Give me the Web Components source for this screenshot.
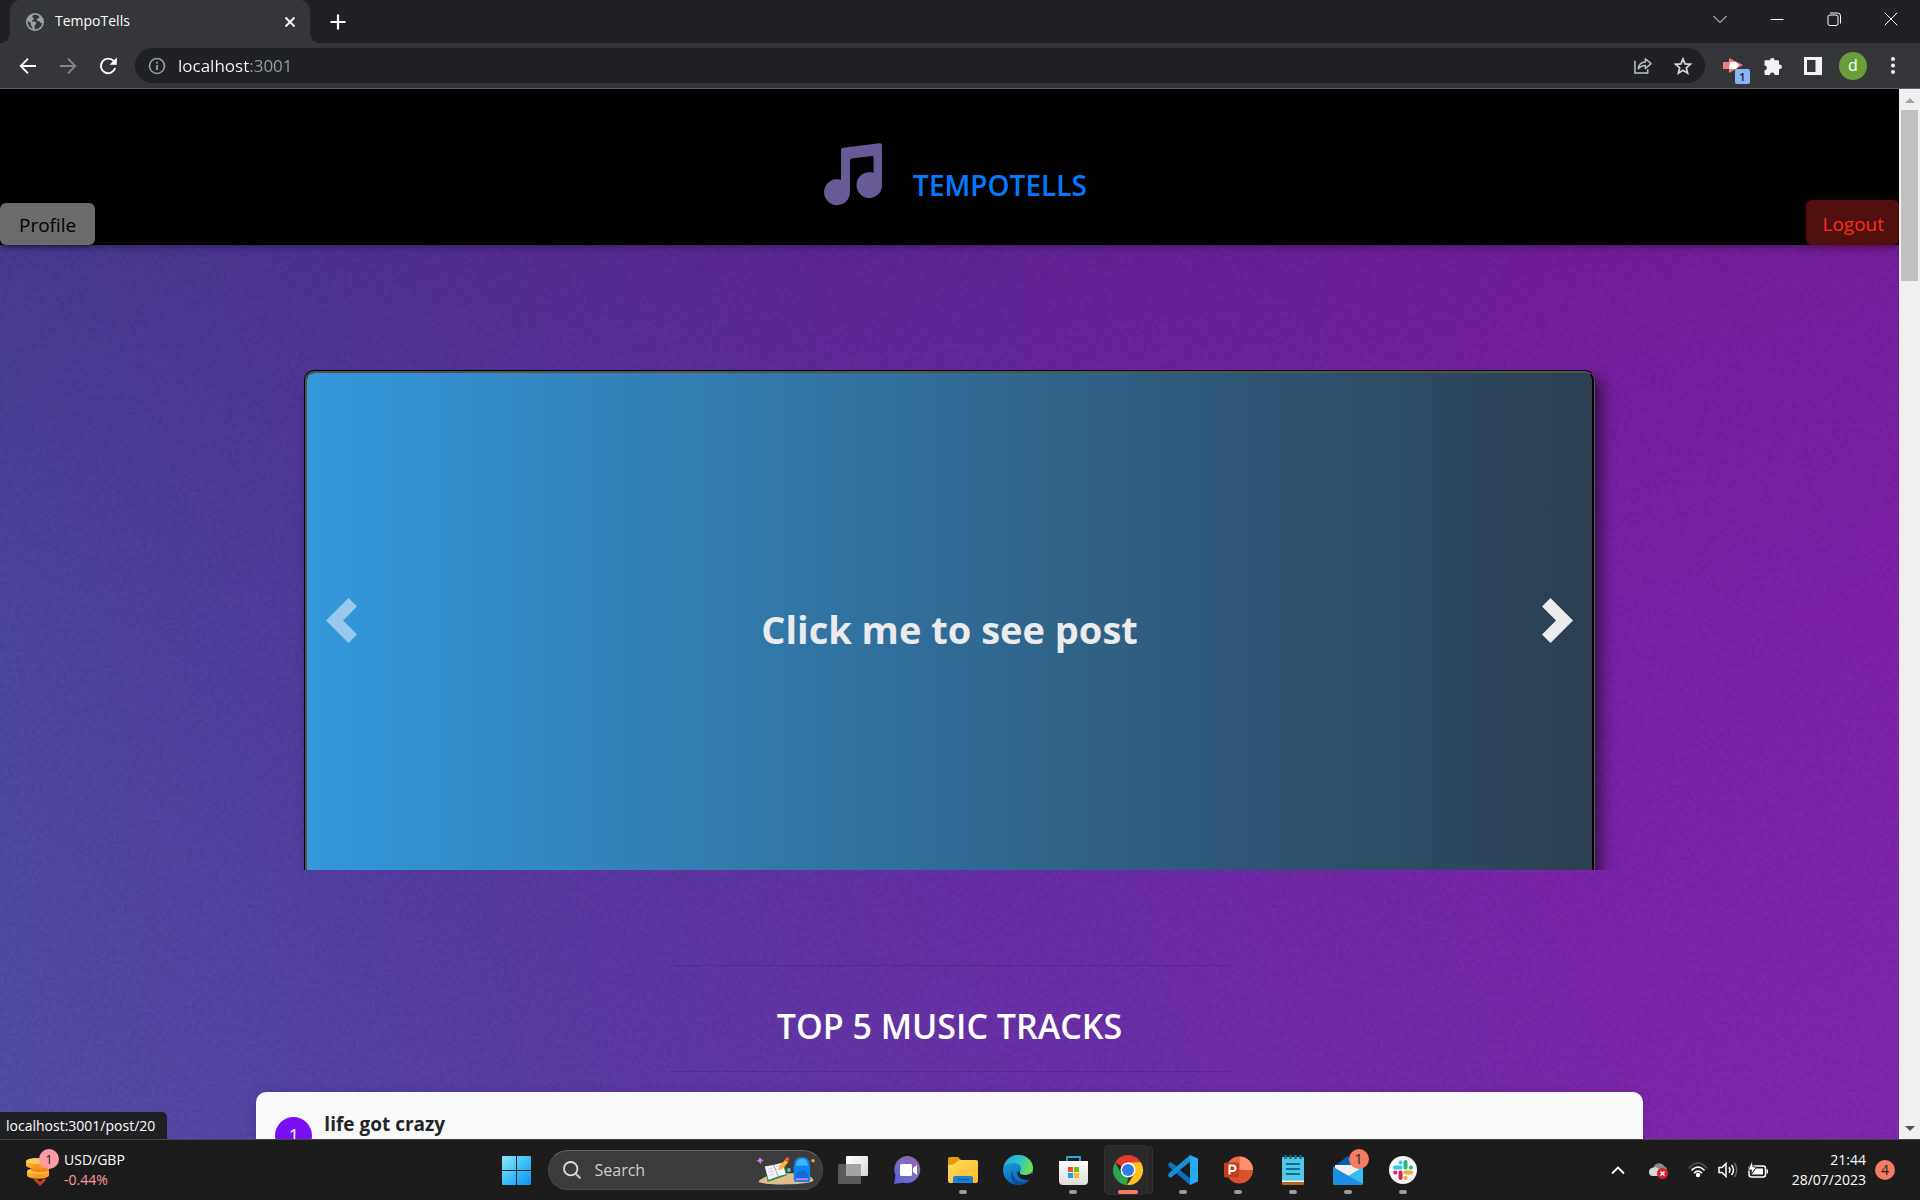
<!DOCTYPE html>
<html lang="en">
<head>
<meta charset="utf-8">
<title>TempoTells</title>
<style>
  html, body { height: 100%; margin: 0; }
  body { font-family: "Open Sans", "Noto Sans", sans-serif; background: #1c1c1c; overflow: hidden; }
</style>
</head>
<body>
<desktop-shell>
  <browser-tabs slot="tabs" label="TempoTells"></browser-tabs>
  <browser-toolbar slot="toolbar" host="localhost" port=":3001"></browser-toolbar>
  <page-view slot="page">
    <site-header>TEMPOTELLS</site-header>
    <post-carousel>Click me to see post</post-carousel>
    <track-section heading="TOP 5 MUSIC TRACKS">
      <track-item rank="1">life got crazy</track-item>
    </track-section>
  </page-view>
  <status-bubble slot="status">localhost:3001/post/20</status-bubble>
  <task-bar slot="taskbar">
    <task-app icon="taskview" label="Task view"></task-app>
    <task-app icon="chat" label="Chat"></task-app>
    <task-app icon="explorer" label="File Explorer" open></task-app>
    <task-app icon="edge" label="Edge"></task-app>
    <task-app icon="store" label="Store" open></task-app>
    <task-app icon="chrome" label="Chrome" open active></task-app>
    <task-app icon="vscode" label="Visual Studio Code" open></task-app>
    <task-app icon="powerpoint" label="PowerPoint" open></task-app>
    <task-app icon="notepad" label="Notepad" open></task-app>
    <task-app icon="mail" label="Mail" open badge="1"></task-app>
    <task-app icon="slack" label="Slack" open></task-app>
  </task-bar>
</desktop-shell>

<script>
const ICONS = {
  globe: `<svg viewBox="0 0 18 18"><circle cx="9" cy="9" r="9" fill="#9aa0a6"/><path d="M9.6 1.8c-2.600 0-3.600 1.200-3.200 2.400.3.900 1.700.7 1.600 1.700-.1.900-1.600.6-2 1.500-.3.800.6 1.200 1.700 1.200 1.600 0 2.600.6 2.500 2-.1 1.300-1.400 1.300-1.600 2.500-.2.900-.1 1.900.400 3.100 3.400.2 6.700-2.300 7.200-6.200-1.300.6-2 .1-2.300-.9-.4-1.200-1.700-.6-2.600-1.400-1-.9-.2-2.200 1-2.400 1.100-.1 1.300-.9.800-1.700C12.300 2.500 11 1.800 9.600 1.800Z M1.800 8.300c1.200.5 2.500.9 2.900 2 .3 1 0 1.700.5 2.500.4.700 1.200 1.200 1.300 2.900C3.500 14.600 1.500 11.700 1.800 8.300Z" fill="#35363a"/></svg>`,
  x: `<svg viewBox="0 0 12 12"><path d="M1.500 1.500l9 9m0-9l-9 9" stroke="#fff" stroke-width="1.800"/></svg>`,
  plus: `<svg viewBox="0 0 16 16"><path d="M8 .5v15M.5 8h15" stroke="#fff" stroke-width="2.200"/></svg>`,
  chevdown: `<svg viewBox="0 0 14 14"><path d="M.5 4l6.500 6.500L13.500 4" fill="none" stroke="#fff" stroke-width="1"/></svg>`,
  min: `<svg viewBox="0 0 14 14"><path d="M.5 7.500h13" stroke="#fff"/></svg>`,
  max: `<svg viewBox="0 0 14 14"><rect x="1" y="3" width="10" height="10.500" rx="2" fill="none" stroke="#fff"/><path d="M3 1h7.500a3 3 0 0 1 3 3v7.500" fill="none" stroke="#fff"/></svg>`,
  close: `<svg viewBox="0 0 14 14"><path d="M.7.7l12.600 12.600m0-12.600L.7 13.300" stroke="#fff"/></svg>`,
  back: `<svg viewBox="0 0 18 18"><path d="M17 9H2m7-7.300L1.700 9 9 16.300" fill="none" stroke="#fff" stroke-width="1.800"/></svg>`,
  forward: `<svg viewBox="0 0 18 18"><path d="M1 9h15M9 1.700L16.300 9 9 16.300" fill="none" stroke="#87888b" stroke-width="1.800"/></svg>`,
  reload: `<svg viewBox="0 0 18 18"><path d="M14.800 4.200A7.300 7.300 0 1 0 16.200 11" fill="none" stroke="#fff" stroke-width="1.900"/><path d="M17.800.5v7.300h-7.300z" fill="#fff"/></svg>`,
  info: `<svg viewBox="0 0 18 18"><circle cx="9" cy="9" r="7.500" fill="none" stroke="#9aa0a6" stroke-width="1.600"/><path d="M9 8v5M9 4.800v1.800" stroke="#9aa0a6" stroke-width="1.800"/></svg>`,
  share: `<svg viewBox="0 0 19 18"><path d="M1 4v13h13.500v-4" fill="none" stroke="#bdc1c6" stroke-width="1.600"/><path d="M4.500 12.500C5 8 8 5.500 12 5.300V1.800L18 7l-6 5.200V9c-3.500 0-5.500 1-7.500 3.500Z" fill="none" stroke="#bdc1c6" stroke-width="1.500" stroke-linejoin="round"/></svg>`,
  star: `<svg viewBox="0 0 18 18"><path d="M9 1.900l2.100 5 5.300.4-4.100 3.500 1.300 5.300L9 13.200l-4.600 2.900 1.300-5.300-4.100-3.500 5.300-.4Z" fill="none" stroke="#d5d7da" stroke-width="1.700"/></svg>`,
  ext: `<svg viewBox="0 0 20 16"><path d="M0 4h6V0l14 7-14 8v-4H0Z" fill="#f57c7c"/><path d="M7 4h6l3 3-3 4H6Z" fill="#fff"/></svg>`,
  puzzle: `<svg viewBox="0 0 18 18"><path d="M6 3.200a2.300 2.300 0 0 1 4.600 0H14a1 1 0 0 1 1 1v3.300h.6a2.300 2.300 0 0 1 0 4.600H15V17a1 1 0 0 1-1 1h-3.300a2.400 2.400 0 0 0-4.800 0H1.500a1 1 0 0 1-1-1v-3.700a2.400 2.400 0 0 0 0-4.800V4.200a1 1 0 0 1 1-1Z" fill="#f1f3f4"/></svg>`,
  panel: `<svg viewBox="0 0 18 18"><path d="M0 0h18v18H0Z M3 3v12h8.500V3Z" fill="#f1f3f4" fill-rule="evenodd"/></svg>`,
  dots: `<svg viewBox="0 0 4 17"><circle cx="2" cy="2" r="2" fill="#f1f3f4"/><circle cx="2" cy="8.500" r="2" fill="#f1f3f4"/><circle cx="2" cy="15" r="2" fill="#f1f3f4"/></svg>`,
  music: `<svg viewBox="0 0 58 62"><path d="M17 7q0-2 2-2.200L55.500.2Q58 0 58 2v38.500A12.800 13 0 1 1 49.500 29.800V14.500q0-1.500-1.500-1.400l-20.500 2.500q-1.500.2-1.500 1.700V48.500A13 13 0 1 1 17 36.800Z" fill="#675a97"/></svg>`,
  prev: `<svg viewBox="0 0 31 45"><path d="M22.500 0L31 8.500 17 22.500 31 36.500 22.500 45 0 22.500Z" fill="#fff"/></svg>`,
  next: `<svg viewBox="0 0 31 45"><path d="M8.500 0L0 8.500 14 22.500 0 36.500 8.500 45 31 22.500Z" fill="#fff"/></svg>`,
  coins: `<svg viewBox="0 0 24 29"><defs><linearGradient id="g" x2="1"><stop stop-color="#ffb52e"/><stop offset=".5" stop-color="#f7931e"/><stop offset="1" stop-color="#ffa726"/></linearGradient></defs><path d="M1 14v4c0 5 22 5 22 0v-4Z" fill="url(#g)"/><ellipse cx="12" cy="14" rx="11" ry="3" fill="#ffc14a"/><path d="M5 9v4c0 3 18 3 18 0V8Z" fill="#f0891a"/><path d="M0 4v4c0 5 20 5 20 0V4Z" fill="url(#g)"/><ellipse cx="10" cy="4" rx="10" ry="3" fill="#ffc95c"/><path d="M9 22l5 5 5-5" fill="none" stroke="#c8401a" stroke-width="3"/></svg>`,
  windows: `<svg viewBox="0 0 29 29"><defs><linearGradient id="g" gradientUnits="userSpaceOnUse" x2="29" y2="29"><stop stop-color="#8fe4fd"/><stop offset=".5" stop-color="#3cc1f8"/><stop offset="1" stop-color="#0a92f5"/></linearGradient></defs><path d="M1 0h13v14H0V1a1 1 0 0 1 1-1ZM15 0h13a1 1 0 0 1 1 1v13H15ZM0 15h14v14H1a1 1 0 0 1-1-1ZM15 15h14v13a1 1 0 0 1-1 1H15Z" fill="url(#g)"/></svg>`,
  lens: `<svg viewBox="0 0 18 18"><circle cx="7.700" cy="7.700" r="6.700" fill="none" stroke="#dcdcdc" stroke-width="1.800"/><path d="M12.500 12.500l5 5" stroke="#b9c0cc" stroke-width="2.400"/></svg>`,
  school: `<svg viewBox="0 0 60 31"><path d="M2 28C0 26 14 19 24 19h20c8 0 16 6 14 8-6 4-48 5-56 1Z" fill="#e2bd8e"/><path d="M9 14l20-4 2 11-20 7Z" fill="#2f8f45"/><path d="M8 12l10-2 8-2 4 12-8 2-10 4Z" fill="#f6f4fb"/><path d="M17 10l5 12" stroke="#9a93b8" stroke-width="1"/><path d="M11 15l5-1.500M12 18l5-1.500M13 21l5-1.500M20 12l5-1.500M21 15l5-1.500" stroke="#b9b3d0" stroke-width=".8"/><path d="M23 12l6-7 3.500 2.500-6 6.500-4 2Z" fill="#ffb02e"/><path d="M28.500 5l1.500-2q2-1.500 3.200.2.800 1.500-.7 3.300Z" fill="#f4584d"/><path d="M38 12q0-10 8.500-10t8.500 10v13q0 3-3 3H41q-3 0-3-3Z" fill="#0a84f0"/><path d="M40.500 11q0-7 6-7t6 7Z" fill="#45b4ff"/><path d="M40 24q0-8 6.500-8t6.500 8Z" fill="#1668d8"/><path d="M40 25h13" stroke="#c77dff" stroke-width="2"/><path d="M3 2l1.500 2.500 2.500 1-2.500 1.500L3.500 9.500 2 7-.5 6 2 4.500Z" fill="#d67cf2"/><circle cx="33" cy="15.500" r="2" fill="#50c8d8"/><circle cx="58" cy="6" r="1.800" fill="#f6a21c"/></svg>`,
  taskview: `<svg viewBox="0 0 30 28"><defs><linearGradient id="g" x2="1" y2="1"><stop stop-color="#fff"/><stop offset="1" stop-color="#d8d8d8"/></linearGradient></defs><rect x="0" y="8" width="23" height="20" rx="1" fill="#5a5a5a"/><rect x="8" y="0" width="22" height="20" rx="1" fill="url(#g)"/><rect x="8" y="8" width="15" height="12" fill="#a3a3a3"/></svg>`,
  chat: `<svg viewBox="0 0 28 28"><defs><linearGradient id="g" x1="1" x2="0" y2="1"><stop stop-color="#9b5fa5"/><stop offset=".5" stop-color="#7b6cc4"/><stop offset="1" stop-color="#4f5fd0"/></linearGradient></defs><path d="M14.500 0A13.700 13.700 0 1 1 9 26.800L0 28l1.500-8.500A13.700 13.700 0 0 1 14.500 0Z" fill="url(#g)"/><rect x="6" y="8" width="12" height="12" rx="1.500" fill="#fff"/><path d="M19 12l4-3v10l-4-3Z" fill="#fff"/></svg>`,
  explorer: `<svg viewBox="0 0 30 27"><defs><linearGradient id="g" x2="1" y2="1"><stop stop-color="#ffdb5e"/><stop offset="1" stop-color="#fdb924"/></linearGradient></defs><path d="M0 2q0-2 2-2h8l3 3v6H0Z" fill="#e09a0b"/><path d="M0 8q6 0 8-2.500Q9.500 3 12 3h16q2 0 2 2v19q0 2-2 2H2q-2 0-2-2Z" fill="url(#g)"/><path d="M5 26v-5q0-2 2-2h16q2 0 2 2v5Z" fill="#1285d8"/><path d="M9 22.500h12" stroke="#0b5aa5" stroke-width="1.500"/></svg>`,
  edge: `<svg viewBox="0 0 30 30"><defs><linearGradient id="a" x2="1" y2=".3"><stop stop-color="#2aa7e0"/><stop offset=".6" stop-color="#2fc2c8"/><stop offset="1" stop-color="#6be04e"/></linearGradient><linearGradient id="b" x2=".4" y2="1"><stop stop-color="#1bafe6"/><stop offset="1" stop-color="#0a62b8"/></linearGradient></defs><circle cx="15" cy="15" r="15" fill="url(#b)"/><path d="M1 11C3 4 9 0 15 0c9 0 15 6 15 13 0 5-4 7-8 7-5 0-6-2-5-4 3-3 0-7-5-8-5 0-9 1-11 3Z" fill="url(#a)"/><path d="M12 11c-5 5-2 14 5 16 4 1 8 0 10.500-3A15 15 0 0 1 15 30C8 29 5 19 12 11Z" fill="#114b94"/><path d="M17 16c-1 2 0 4 5 4 2.500 0 5-.6 6.500-2l1.500 4-2.500 2c-7 3-14-2-13-7Z" fill="#1c1c1c"/></svg>`,
  store: `<svg viewBox="0 0 29 29"><defs><linearGradient id="g" y2="1" x2="0"><stop stop-color="#fff"/><stop offset="1" stop-color="#dcdcdc"/></linearGradient></defs><path d="M8 5V1h13v4" fill="none" stroke="#23a8e6" stroke-width="1.800"/><path d="M0 5h29v20q0 4-4 4H4q-4 0-4-4Z" fill="url(#g)"/><path d="M9 11h5v5H9Z" fill="#f04e23"/><path d="M15 11h5v5h-5Z" fill="#7fb80e"/><path d="M9 17h5v5H9Z" fill="#10a3e8"/><path d="M15 17h5v5h-5Z" fill="#fdb813"/></svg>`,
  chrome: `<svg viewBox="0 0 30 30"><path d="M15 15L2 7.500A15 15 0 0 1 28 7.500Z" fill="#e63b2e"/><path d="M2 7.500L8.500 18.700 15 22.500 14 30A15 15 0 0 1 2 7.500Z" fill="#2da44e"/><path d="M28 7.500A15 15 0 0 1 14 30l7.500-11.200L22 7.500Z" fill="#fcc21b"/><path d="M15 7.500h13L22 19Z" fill="#fcc21b"/><circle cx="15" cy="15" r="7.500" fill="#fff"/><circle cx="15" cy="15" r="6" fill="#2f7bea"/></svg>`,
  vscode: `<svg viewBox="0 0 30 30"><path d="M0 9l2.500-2 5 3.500L22 23v7L1 12Z" fill="#0d71b9"/><path d="M0 21l2.500 2L22 7V0L1 18Z" fill="#168fd6"/><path d="M22 0l8 3.500v23L22 30Z" fill="#29a9f2"/><path d="M12 15L22 7v16Z" fill="#1c1c1c"/></svg>`,
  powerpoint: `<svg viewBox="0 0 29 28"><circle cx="15.500" cy="14" r="13.500" fill="#d9532f"/><path d="M15.500.5A13.500 13.500 0 0 1 29 14H15.500Z" fill="#fd9073"/><path d="M15.500.5A13.500 13.500 0 0 0 2 14h13.500Z" fill="#eb6b49"/><rect x="0" y="6.500" width="15" height="15" rx="1.500" fill="#c23b1b"/><path d="M5.500 18.500v-9h3.200a2.800 2.800 0 0 1 0 5.600H5.500" fill="none" stroke="#fff" stroke-width="2"/></svg>`,
  notepad: `<svg viewBox="0 0 22 30"><rect x="0" y="24" width="22" height="6" rx="1" fill="#b0671d"/><rect x="0" y="23" width="22" height="4" fill="#f2f2f2"/><rect x="0" y="2" width="22" height="23.500" rx="1" fill="#53c5e6"/><path d="M3.500 0v4m5-4v4m5-4v4m5-4v4" stroke="#0b6d8f" stroke-width="2.400"/><path d="M4 9h14M4 14h14M4 19h14" stroke="#0b6f92" stroke-width="1.800"/></svg>`,
  mail: `<svg viewBox="0 0 30 29"><path d="M0 11L15 0l15 11v6H0Z" fill="#0c5fae"/><path d="M2 9h26v8l-13 5L2 17Z" fill="#f0f0f0"/><path d="M0 11l15 9L30 11v16q0 2-2 2H2q-2 0-2-2Z" fill="#35bdf4"/><path d="M0 11l30 17q-1 1-2 1H2q-2 0-2-2Z" fill="#1e8fe0"/></svg>`,
  slack: `<svg viewBox="0 0 28 28"><circle cx="14" cy="14" r="14" fill="#f7f7f7"/><g stroke-width="4" stroke-linecap="round"><path d="M11.500 6.500v.1M6 11.500h5.500" stroke="#36c5f0"/><path d="M16.500 6v5.500M21.800 11.500h.1" stroke="#2eb67d"/><path d="M16.500 21.800v.1M16.500 16.500H22" stroke="#ecb22e"/><path d="M11.500 16.500V22M6.200 16.500h.1" stroke="#e01e5a"/></g></svg>`,
  up: `<svg viewBox="0 0 14 10"><path d="M1 8.500l6-6 6 6" fill="none" stroke="#fff" stroke-width="1.800"/></svg>`,
  cloud: `<svg viewBox="0 0 20 17"><path d="M6 4a6 6 0 0 1 10 0q3 1 3 4v6H6Z" fill="#8a8a8a"/><path d="M1 10q0-4 4-4.500Q9 4 11 8q3 0 3 3t-3 3H4q-3-.5-3-4Z" fill="#d6d6d6"/><circle cx="14.500" cy="11.500" r="5.500" fill="#d6202c"/><path d="M12.500 9.500l4 4m0-4l-4 4" stroke="#fff" stroke-width="1.500"/></svg>`,
  wifi: `<svg viewBox="0 0 20 16"><g fill="none" stroke-width="1.600"><path d="M.8 6.500Q10-4.500 19.200 6.500" stroke="#555"/><path d="M3.500 8.500q6.500-7 13 0M6 11.200q4-4.200 8 0" stroke="#fff"/></g><circle cx="10" cy="13" r="2.200" fill="#fff"/></svg>`,
  volume: `<svg viewBox="0 0 20 16"><g fill="none" stroke="#fff" stroke-width="1.500"><path d="M1 5.500h3L8 1.500v13L4 10.500H1Z"/><path d="M11 5.300q2 2.700 0 5.400M13.500 3q4 5 0 10"/><path d="M16.500 1q4.500 7 0 14" stroke="#666"/></g></svg>`,
  battery: `<svg viewBox="0 0 20 17"><rect x="1" y="4" width="16.500" height="11" rx="2.500" fill="none" stroke="#fff" stroke-width="1.500"/><path d="M3.500 12.500h11.500v-6H8Z" fill="#fff"/><path d="M18.500 7.500H20v4h-1.500Z" fill="#fff"/><path d="M4-1L0 8h3.500L3 12.500 8.500 5H5Z" fill="#fff" stroke="#1c1c1c" stroke-width=".8"/></svg>`
};

/* Shared base: renders a template into an open shadow root */
class Part extends HTMLElement {
  connectedCallback() {
    if (this.shadowRoot) return;
    const t = document.createElement('template');
    t.innerHTML = `<style>*{box-sizing:border-box}button{border:0;padding:0;background:none;color:inherit;font:inherit;display:grid;place-items:center;cursor:pointer}</style>` + this.view();
    this.attachShadow({ mode: 'open' }).append(t.content.cloneNode(true));
  }
  get(name) { return this.getAttribute(name) || ''; }
}

customElements.define('ui-icon', class extends Part {
  view() {
    return `<style>:host{display:block;flex:none;width:var(--w,18px)}svg{display:block;width:100%;overflow:visible}</style>${ICONS[this.get('name')]}`;
  }
});

customElements.define('desktop-shell', class extends Part {
  view() { return `<style>
    :host{display:flex;flex-direction:column;height:100vh}
    .screen{flex:1;min-height:0;position:relative;display:flex;border-top:1px solid #606164}
    ::slotted(page-view){flex:1;min-width:0}
    ::slotted(status-bubble){position:absolute;left:0;bottom:0;z-index:2}
    .bar{width:21px;background:#f0f0f0;display:flex;flex-direction:column;align-items:center;justify-content:space-between;padding-bottom:8px}
    .top{display:flex;flex-direction:column;align-items:center;gap:7px;padding-top:9px}
    .up,.down{border:5px solid transparent}
    .up{border-top:0;border-bottom-color:#a3a3a3}
    .down{border-bottom:0;border-top-color:#505050}
    .thumb{width:17px;height:171px;background:#c1c1c1}
  </style>
  <slot name="tabs"></slot><slot name="toolbar"></slot>
  <div class="screen"><slot name="page"></slot>
    <div class="bar"><div class="top"><div class="up"></div><div class="thumb"></div></div><div class="down"></div></div>
    <slot name="status"></slot></div>
  <slot name="taskbar"></slot>`; }
});

customElements.define('browser-tabs', class extends Part {
  view() { return `<style>
    :host{display:flex;height:43px;flex:none;background:#202124;color:#fff;padding:0 1px 0 10px;align-items:stretch}
    .tab{position:relative;width:300px;background:#35363a;border-radius:10px 10px 0 0;display:flex;align-items:center;padding:0 14px 0 16px;gap:11px;font-size:14px;line-height:20px}
    .tab::before,.tab::after{content:"";position:absolute;bottom:0;width:10px;height:10px}
    .tab::before{left:-10px;background:radial-gradient(circle at 0 0,#202124 10px,#35363a 10px)}
    .tab::after{right:-10px;background:radial-gradient(circle at 100% 0,#202124 10px,#35363a 10px)}
    .name{flex:1;padding-bottom:1px}
    .new{width:55px}
    .win{margin-left:auto;display:flex;--w:14px}
    .win button{width:57px;height:37px}
  </style>
  <div class="tab"><ui-icon name="globe"></ui-icon><span class="name">${this.get('label')}</span>
    <button aria-label="Close tab" style="--w:12px"><ui-icon name="x"></ui-icon></button></div>
  <button class="new" aria-label="New tab" style="--w:16px"><ui-icon name="plus"></ui-icon></button>
  <div class="win"><button aria-label="Search tabs"><ui-icon name="chevdown"></ui-icon></button><button aria-label="Minimise"><ui-icon name="min"></ui-icon></button><button aria-label="Restore"><ui-icon name="max"></ui-icon></button><button aria-label="Close"><ui-icon name="close"></ui-icon></button></div>`; }
});

customElements.define('browser-toolbar', class extends Part {
  view() { return `<style>
    :host{display:flex;height:45px;flex:none;background:#35363a;align-items:center;padding:0 7px 0 8px;color:#fff}
    button{width:40px;height:36px}
    .omni{flex:1;height:35px;margin:0 8px 0 7px;border-radius:18px;background:#202124;display:flex;align-items:center;padding:0 2px 0 13px;gap:12px}
    .acts{display:flex}
    input{flex:1;min-width:0;border:0;outline:0;padding:0;font:17px/24px "Open Sans",sans-serif;color:#fff;background:linear-gradient(90deg,#fff 71px,#9aa0a6 71px);-webkit-background-clip:text;background-clip:text;-webkit-text-fill-color:transparent}
    .ext{position:relative}
    .count{position:absolute;right:3px;bottom:0;width:15px;height:15px;border-radius:2px;background:#8ab4f8;color:#202124;font:600 11px/15px "Open Sans",sans-serif;text-align:center}
    .me span{width:28px;height:28px;border-radius:50%;background:#689f38;font-size:16px;line-height:27px}
  </style>
  <button aria-label="Back"><ui-icon name="back"></ui-icon></button>
  <button aria-label="Forward"><ui-icon name="forward"></ui-icon></button>
  <button aria-label="Reload"><ui-icon name="reload"></ui-icon></button>
  <div class="omni"><ui-icon name="info"></ui-icon>
    <input aria-label="Address" value="${this.get('host')}${this.get('port')}">
    <div class="acts"><button aria-label="Share"><ui-icon name="share"></ui-icon></button><button aria-label="Bookmark"><ui-icon name="star"></ui-icon></button></div></div>
  <button class="ext" aria-label="Extension" style="--w:20px"><ui-icon name="ext"></ui-icon><span class="count">1</span></button>
  <button aria-label="Extensions"><ui-icon name="puzzle"></ui-icon></button>
  <button aria-label="Side panel"><ui-icon name="panel"></ui-icon></button>
  <button class="me" aria-label="Account"><span>d</span></button>
  <button aria-label="Menu" style="--w:4px"><ui-icon name="dots"></ui-icon></button>`; }
});

customElements.define('page-view', class extends Part {
  view() { return `<style>
    :host{display:block;position:relative;overflow:hidden;isolation:isolate;
      background:linear-gradient(180deg,rgba(20,0,40,.16),rgba(20,0,40,0) 50%,rgba(160,100,230,.1)),linear-gradient(73deg,#4c4ca2 0%,#543a9f 25%,#672ca4 50%,#7b22a8 75%,#8522ae 100%)}
    .grain{position:absolute;inset:0;width:100%;height:100%;opacity:.1;z-index:-1}
  </style>
  <svg class="grain" aria-hidden="true"><filter id="n" color-interpolation-filters="sRGB"><feTurbulence type="fractalNoise" baseFrequency=".25" numOctaves="2"/><feColorMatrix values="0 0 0 0 0  0 0 0 0 0  0 0 0 0 .1  1.500 0 0 0 -.4"/></filter><rect width="100%" height="100%" filter="url(#n)"/></svg>
  <slot></slot>`; }
});

customElements.define('site-header', class extends Part {
  view() { return `<style>
    :host{display:grid;grid-template-columns:1fr auto 1fr;height:156px;background:#000;align-items:end;box-shadow:0 2px 8px rgba(0,0,0,.35)}
    a{display:flex;align-items:flex-end;gap:31px;padding:0 0 40px 12px;color:#007bff;text-decoration:none;font-weight:600;font-size:28px;line-height:40px;--w:58px}
    button{border-radius:6px;font-size:19px;line-height:24px}
    .profile{justify-self:start;background:#6b6b6b;color:#000;padding:10px 19px 8px;box-shadow:0 2px 5px rgba(0,0,0,.3)}
    .logout{justify-self:end;background:#4f100e;color:#ff2c1f;padding:12px 15px 9px 16px;box-shadow:0 0 8px rgba(79,16,14,.5)}
  </style>
  <button class="profile">Profile</button>
  <a href="#"><ui-icon name="music"></ui-icon><span><slot></slot></span></a>
  <button class="logout">Logout</button>`; }
});

customElements.define('post-carousel', class extends Part {
  view() { return `<style>
    :host{display:block;position:relative;width:calc(68% - 1px);height:500px;margin:125px auto 0;overflow-y:clip}
    .card{height:518px;display:grid;place-items:center;border:3px groove #000;border-radius:10px;background:linear-gradient(90deg,#3498db,#2c3e50);box-shadow:7px 7px 14px rgba(0,0,0,.5);color:#ebebeb;font-weight:700;font-size:38px;line-height:52px;text-decoration:none}
    button{position:absolute;top:0;bottom:0;--w:31px}
    .prev{left:22px;opacity:.5}.next{right:22px;opacity:.9}
  </style>
  <a class="card" href="#"><slot></slot></a>
  <button class="prev" aria-label="Previous"><ui-icon name="prev"></ui-icon></button>
  <button class="next" aria-label="Next"><ui-icon name="next"></ui-icon></button>`; }
});

customElements.define('track-section', class extends Part {
  view() { return `<style>
    :host{display:block;margin-top:95px}
    hr{width:560px;margin:0 auto;border:0;border-top:1px solid rgba(0,0,0,.14)}
    h2{margin:0;padding:37px 0 22px;text-align:center;color:#fff;font-weight:600;font-size:34px;line-height:46px}
    .list{width:73%;margin:20px auto 0;background:#f9f9f9;border-radius:10px;padding:20px 19px;min-height:400px;box-shadow:0 0 10px rgba(0,0,0,.15)}
  </style>
  <hr><h2>${this.get('heading')}</h2><hr><div class="list"><slot></slot></div>`; }
});

customElements.define('track-item', class extends Part {
  view() { return `<style>
    :host{display:flex;gap:12px;align-items:flex-start;color:#212529}
    .rank{flex:none;width:37px;height:37px;margin-top:5px;border-radius:50%;background:#7a10f2;color:#fff;font-size:18px;line-height:37px;text-align:center}
    .name{font-size:19px;line-height:24px;font-weight:700}
  </style>
  <span class="rank">${this.get('rank')}</span><span class="name"><slot></slot></span>`; }
});

customElements.define('status-bubble', class extends Part {
  view() { return `<style>:host{display:block;background:#202124;color:#fff;font-size:14px;line-height:20px;padding:4px 12px 3px 6px;border-radius:0 5px 0 0}</style><slot></slot>`; }
});

customElements.define('task-app', class extends Part {
  view() {
    const widths = { taskview:30, chat:28, explorer:30, edge:30, store:29, chrome:30, vscode:30, powerpoint:29, notepad:22, mail:30, slack:28 };
    const open = this.hasAttribute('open'), active = this.hasAttribute('active');
    return `<style>
    :host{display:block}
    button{position:relative;width:55px;height:50px;--w:${widths[this.get('icon')]}px}
    .plate{position:absolute;top:0;bottom:0;left:3px;width:44px;border-radius:5px;background:#2a2a2a;border:1px solid #333;box-shadow:5px 0 0 -1px #262626,6px 0 0 -1px #353535}
    ui-icon{position:relative}
    .mark{position:absolute;bottom:1px;left:calc(50% - ${active ? 10 : 4}px);width:${active ? 20 : 8}px;height:4px;border-radius:2px;background:${active ? '#f47c63' : '#9b9b9b'}}
    .badge{position:absolute;left:28px;top:4px;width:20px;height:20px;border-radius:50%;background:#f47c63;color:#1c1c1c;font-size:14px;line-height:20px}
    </style><button aria-label="${this.get('label')}">${active ? '<span class="plate"></span>' : ''}<ui-icon name="${this.get('icon')}"></ui-icon>${open ? '<span class="mark"></span>' : ''}${this.get('badge') ? `<span class="badge">${this.get('badge')}</span>` : ''}</button>`;
  }
});

customElements.define('task-bar', class extends Part {
  view() { return `<style>
    :host{display:grid;grid-template-columns:1fr auto 1fr;height:60px;flex:none;align-items:center;background:#1c1c1c;border-top:1px solid #454545;color:#fff}
    .widget{display:flex;justify-self:start;gap:14px;padding-left:26px;text-align:left;font-size:14px;line-height:20px}
    .coins{position:relative;padding-top:2px;--w:24px}
    .coins b{position:absolute;left:13px;top:-6px;width:20px;height:20px;border-radius:50%;background:#ff99a4;color:#1c1c1c;font-weight:400;font-size:13px;line-height:20px;text-align:center}
    .down{display:block;color:#ff99a4}
    .mid{display:flex;align-items:center}
    .start{width:54px;height:50px;--w:29px}
    .search{width:275px;height:40px;margin:0 3px 0 4px;border-radius:20px;background:#3b3b3b;border:1px solid #4b4b4b;border-top-color:#666;display:flex;align-items:center;gap:14px;padding:0 7px 0 14px}
    input{flex:1;min-width:0;border:0;outline:0;padding:0;background:none;color:#fff;font:16px/22px "Open Sans",sans-serif}
    input::placeholder{color:#cfcfcf;opacity:1}
    .tray{justify-self:end;display:flex;align-items:center;padding-right:25px}
    .tray>button{width:30px;height:40px;--w:20px}
    .tray>.up{width:40px;--w:14px}.tray>.cloud{width:40px;margin-right:5px}
    .tray>.clock{justify-items:end;align-content:center;width:auto;margin-left:19px;font-size:14px;line-height:20px}
    .tray>.note{width:20px;height:20px;margin-left:9px;border-radius:50%;background:#f47c63;color:#1c1c1c;font-size:14px;line-height:20px}
  </style>
  <button class="widget"><span class="coins"><ui-icon name="coins"></ui-icon><b>1</b></span><span>USD/GBP<span class="down">-0.44%</span></span></button>
  <div class="mid"><button class="start" aria-label="Start"><ui-icon name="windows"></ui-icon></button>
    <label class="search"><ui-icon name="lens"></ui-icon><input type="search" placeholder="Search" aria-label="Search"><ui-icon name="school" style="--w:58px"></ui-icon></label>
    <slot style="display:flex"></slot></div>
  <div class="tray"><button class="up" aria-label="Hidden icons"><ui-icon name="up"></ui-icon></button><button class="cloud" aria-label="OneDrive"><ui-icon name="cloud"></ui-icon></button><button aria-label="Wi-Fi"><ui-icon name="wifi"></ui-icon></button><button aria-label="Volume"><ui-icon name="volume"></ui-icon></button><button aria-label="Battery"><ui-icon name="battery"></ui-icon></button>
    <button class="clock"><time>21:44</time><time>28/07/2023</time></button><button class="note">4</button></div>`; }
});
</script>
</body>
</html>
